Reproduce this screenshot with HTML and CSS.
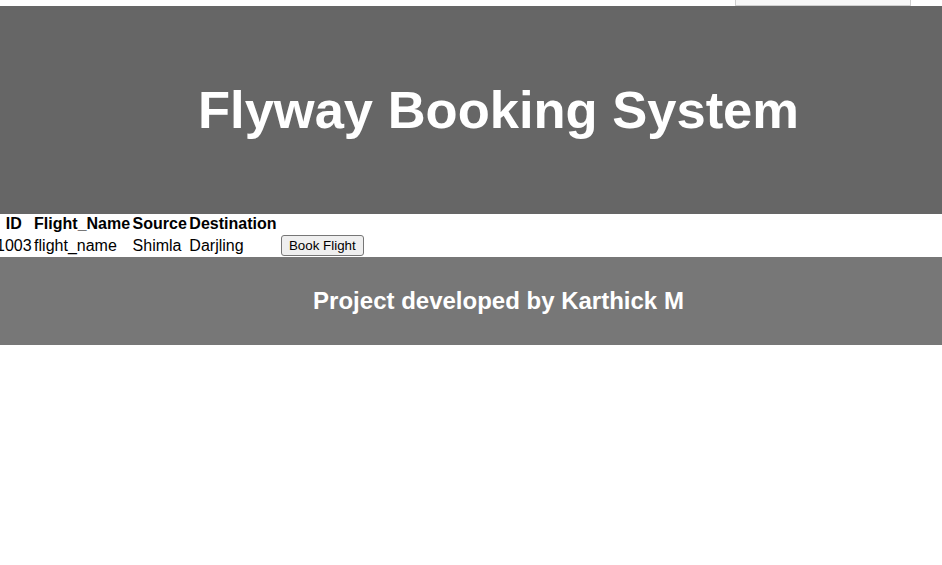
FILE: index.html
```html
<!DOCTYPE html>
<html>
<head>
<meta charset="utf-8">
<title>Flyway Booking System</title>
<link rel="stylesheet" href="styles.css">
</head>
<body>
<div class="topbox"></div>
<header class="banner">
  <h1 class="title">Flyway Booking System</h1>
</header>
<table class="flights">
  <tr>
    <th>ID</th>
    <th>Flight_Name</th>
    <th>Source</th>
    <th>Destination</th>
    <th></th>
  </tr>
  <tr>
    <td>1003</td>
    <td>flight_name</td>
    <td>Shimla</td>
    <td>Darjling</td>
    <td><button class="book">Book Flight</button></td>
  </tr>
</table>
<footer class="foot">
  <h2 class="credit">Project developed by Karthick M</h2>
</footer>
</body>
</html>
```
FILE: styles.css
```css
html, body {
  margin: 0;
  padding: 0;
  background: #ffffff;
  overflow: hidden;
}
body {
  padding-top: 6px;
  font-family: "Liberation Sans", Arial, sans-serif;
  color: #000;
  position: relative;
}
.topbox {
  position: absolute;
  top: -30px;
  left: 735px;
  width: 174px;
  height: 34px;
  background: #f6f6f6;
  border: 1px solid #cfcfcf;
}
.banner {
  background: #666666;
  height: 208px;
  display: flex;
  align-items: center;
  justify-content: center;
  padding-left: 55px;
}
.title {
  margin: 0;
  color: #ffffff;
  font-size: 52.5px;
  font-weight: bold;
  line-height: 1;
}
.flights {
  border-collapse: separate;
  border-spacing: 0;
  margin-left: -5px;
  font-size: 16px;
}
.flights th,
.flights td {
  padding: 1px 1.5px 1px 1px;
  line-height: 18px;
}
.flights th {
  font-weight: bold;
  text-align: center;
}
.flights td {
  text-align: left;
  vertical-align: middle;
}
.book {
  margin: 0 0 0 2px;
  font-family: "Liberation Sans", Arial, sans-serif;
  font-size: 13.333px;
  padding: 1px 7px;
  height: 21px;
  background: #efefef;
  border: 1px solid #767676;
  border-radius: 3px;
  color: #000;
}
.foot {
  background: #777777;
  height: 88px;
  display: flex;
  align-items: center;
  justify-content: center;
  padding-left: 55px;
}
.credit {
  margin: 0;
  color: #ffffff;
  font-size: 24px;
  font-weight: bold;
  line-height: 1;
}
```
